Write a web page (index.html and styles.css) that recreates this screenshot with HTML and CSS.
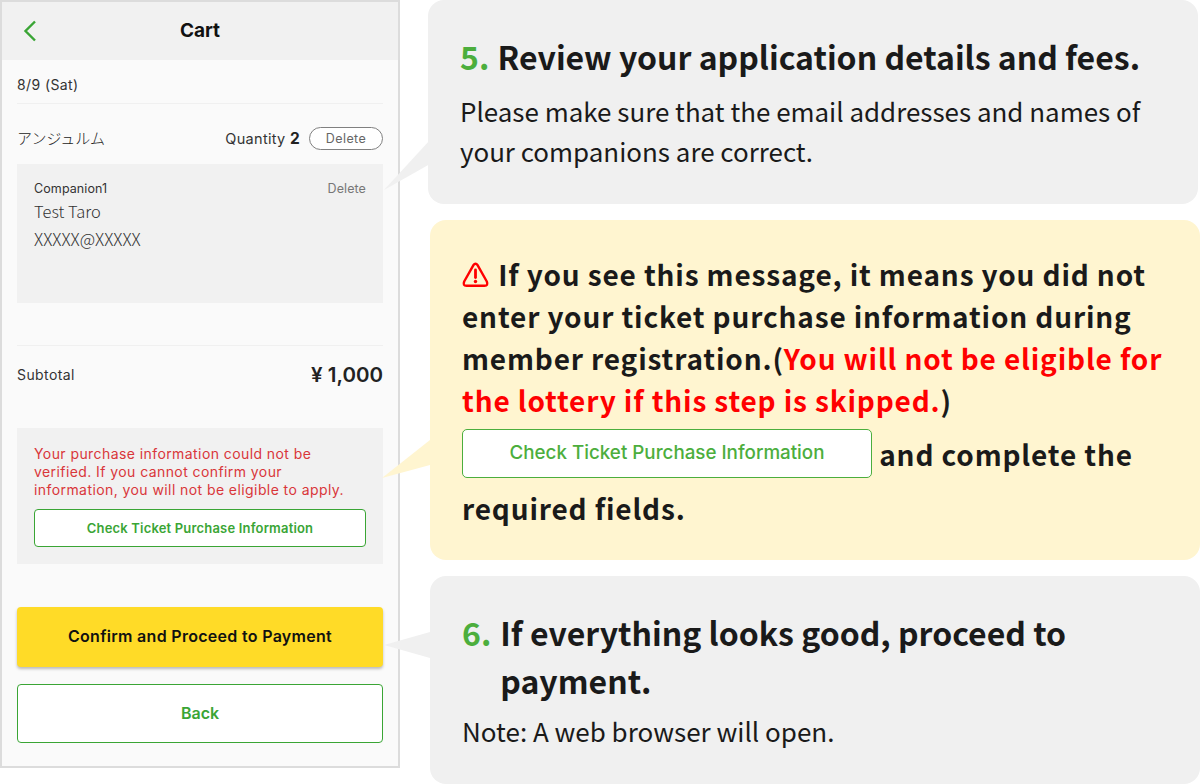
FILE: index.html
```html
<!DOCTYPE html>
<html lang="en">
<head>
<meta charset="utf-8">
<title>Cart guide</title>
<link rel="stylesheet" href="styles.css">
</head>
<body>
<div class="page">
  <section class="phone">
    <header class="topbar">
      <svg class="back-icon" width="14" height="22" viewBox="0 0 14 22"><path d="M12 1.500 2.500 11 12 20.500" fill="none" stroke="#3aa535" stroke-width="2.400"/></svg>
      <h1 class="topbar-title">Cart</h1>
    </header>
    <div class="content">
      <div class="date">8/9 (Sat)</div>
      <div class="item-row">
        <span class="artist">アンジュルム</span>
        <span class="qty">Quantity <b>2</b></span>
        <span class="pill">Delete</span>
      </div>
      <div class="companion">
        <div class="companion-head"><span>Companion1</span><span class="companion-del">Delete</span></div>
        <div class="companion-name">Test Taro</div>
        <div class="companion-mail">XXXXX@XXXXX</div>
      </div>
      <div class="subtotal">
        <span class="subtotal-label">Subtotal</span>
        <span class="subtotal-price">¥ 1,000</span>
      </div>
      <div class="warn-box">
        <p class="warn-text">Your purchase information could not be verified. If you cannot confirm your information, you will not be eligible to apply.</p>
        <div class="check-btn">Check Ticket Purchase Information</div>
      </div>
      <div class="pay-btn">Confirm and Proceed to Payment</div>
      <div class="return-btn">Back</div>
    </div>
  </section>
  <div class="notes">
    <section class="card card-one">
      <h2 class="step"><span class="num num-five">5.</span> Review your application details and fees.</h2>
      <p class="body-one">Please make sure that the email addresses and names of your companions are correct.</p>
      <svg class="tail tail-one" width="48" height="60" viewBox="0 0 48 60"><polygon points="0,50 46,0 46,24" fill="#f0f0f0"/></svg>
    </section>
    <section class="card card-two">
      <p class="alert"><svg class="alert-icon" width="27" height="26" viewBox="0 0 27 26"><path d="M11.300 3.300Q13.500 .3 15.700 3.300L24.800 19.500Q26.500 23.800 22.500 23.800H4.500Q.5 23.800 2.200 19.500Z" fill="none" stroke="#f00" stroke-width="2.400" stroke-linejoin="round"/><path d="M13.500 8v7.500" stroke="#f00" stroke-width="2.800" stroke-linecap="round"/><circle cx="13.500" cy="19.500" r="1.700" fill="#f00"/></svg> If you see this message, it means you did not enter your ticket purchase information during member registration.(<em class="red">You will not be eligible for the lottery if this step is skipped.</em>)</p>
      <p class="alert-end"><span class="sample-btn">Check Ticket Purchase Information</span> and complete the required fields.</p>
      <svg class="tail tail-two" width="50" height="42" viewBox="0 0 50 42"><polygon points="0,38 48,0 48,25" fill="#fff5d0"/></svg>
    </section>
    <section class="card card-three">
      <h2 class="step step-six"><span class="num">6.</span><span>If everything looks good, proceed to payment.</span></h2>
      <p class="note">Note: A web browser will open.</p>
      <svg class="tail tail-three" width="48" height="30" viewBox="0 0 48 30"><polygon points="0,13 46,0 46,26" fill="#f0f0f0"/></svg>
    </section>
  </div>
</div>
</body>
</html>
```
FILE: styles.css
```css
* { box-sizing: border-box; }
html, body { margin: 0; padding: 0; background: #fff; }
body { width: 1200px; height: 784px; overflow: hidden; }
p, h1, h2 { margin: 0; }
.page { display: flex; width: 1200px; height: 784px; align-items: flex-start; font-family: Inter, "Noto Sans CJK JP", sans-serif; }
.phone { width: 400px; height: 768px; border: 2px solid #dcdcdc; background: #fafafa; flex: none; display: flex; flex-direction: column; }
.topbar { height: 58px; background: #f1f1f1; display: flex; align-items: center; justify-content: center; position: relative; flex: none; }
.back-icon { position: absolute; left: 21px; top: 18px; }
.topbar-title { font-size: 19px; font-weight: 700; color: #111; line-height: 24px; margin-top: -1px; }
.content { padding: 0 15px; display: flex; flex-direction: column; flex: 1; }
.date { height: 44px; border-bottom: 1px solid #f0f0f0; font-size: 14px; letter-spacing: .4px; color: #333; display: flex; align-items: center; padding-top: 6px; }
.item-row { height: 60px; display: flex; align-items: center; padding-top: 8px; }
.artist { font-family: "Noto Sans CJK JP", sans-serif; font-size: 15px; font-weight: 300; color: #222; flex: 1; margin-top: -2px; }
.qty { font-size: 14.500px; letter-spacing: .3px; color: #333; margin-right: 9px; }
.qty b { font-size: 15.500px; color: #222; }
.pill { width: 74px; height: 23px; border: 1px solid #808080; border-radius: 12px; background: #fff; font-size: 12.500px; letter-spacing: .4px; color: #666; display: flex; align-items: center; justify-content: center; }
.companion { height: 139px; background: #f1f1f1; padding: 17px 17px; flex: none; }
.companion-head { display: flex; justify-content: space-between; font-size: 12.500px; letter-spacing: .1px; color: #333; line-height: 16px; }
.companion-del { color: #777; }
.companion-name, .companion-mail { font-family: "Noto Sans CJK JP", sans-serif; font-weight: 300; color: #333; line-height: 28px; }
.companion-name { font-size: 16.500px; }
.companion-mail { font-size: 16.900px; }
.subtotal { margin-top: 42px; height: 59px; border-top: 1px solid #f0f0f0; display: flex; justify-content: space-between; align-items: center; flex: none; }
.subtotal-label { font-size: 14px; letter-spacing: .4px; color: #333; margin-top: -1px; }
.subtotal-price { font-size: 20.500px; font-weight: 600; color: #222; margin-top: -1px; }
.warn-box { margin-top: 24px; height: 136px; background: #f1f1f1; padding: 17px 17px 0; flex: none; }
.warn-text { font-size: 14px; letter-spacing: .42px; line-height: 18px; color: #d9363a; }
.check-btn { margin-top: 10px; height: 38px; background: #fff; border: 1px solid #3aa535; border-radius: 4px; color: #3aa535; font-size: 13px; letter-spacing: .18px; font-weight: 600; display: flex; align-items: center; justify-content: center; }
.pay-btn { margin-top: 43px; height: 60px; padding-bottom: 2px; background: #ffdb27; border-radius: 4px; box-shadow: 0 2px 3px rgba(0,0,0,.25); display: flex; align-items: center; justify-content: center; font-size: 16px; letter-spacing: .3px; font-weight: 600; color: #111; flex: none; }
.return-btn { margin-top: 17px; height: 59px; padding-bottom: 2px; background: #fff; border: 1px solid #3aa535; border-radius: 4px; display: flex; align-items: center; justify-content: center; font-size: 16px; font-weight: 600; color: #3aa535; flex: none; }
.notes { margin-left: 28px; width: 772px; display: flex; flex-direction: column; gap: 16px; font-family: "Noto Sans CJK JP", sans-serif; color: #1a1a1a; }
.card { position: relative; border-radius: 16px; padding: 32px 32px 0; }
.card-one { width: 770px; height: 204px; background: #f0f0f0; }
.card-two { width: 770px; height: 340px; margin-left: 2px; background: #fff5d0; padding-top: 33px; }
.card-three { width: 770px; height: 208px; margin-left: 2px; background: #f0f0f0; }
.step { font-size: 32px; font-weight: 700; line-height: 48px; }
.num { color: #4cae3d; }
.num-five { margin-right: 1px; }
.body-one { font-size: 25.950px; font-weight: 400; line-height: 40px; margin-top: 11px; }
.alert, .alert-end { font-size: 28px; font-weight: 700; line-height: 42px; letter-spacing: .85px; }
.alert-icon { vertical-align: -2px; margin-right: 2px; }
.red { color: #f00; font-style: normal; }
.alert-end { line-height: 54px; margin-top: 6px; }
.sample-btn { display: inline-flex; vertical-align: 7px; width: 410px; height: 49px; background: #fff; border: 1.500px solid #4cae3d; border-radius: 5px; color: #4cae3d; font-family: Inter, sans-serif; font-size: 18.800px; font-weight: 500; align-items: center; justify-content: center; letter-spacing: 0; }
.step-six { display: flex; gap: 9px; }
.note { font-size: 26px; line-height: 40px; margin-top: 7px; }
.tail { position: absolute; }
.tail-one { left: -44px; top: 140px; }
.tail-two { left: -48px; top: 220px; }
.tail-three { left: -46px; top: 56px; }
```
